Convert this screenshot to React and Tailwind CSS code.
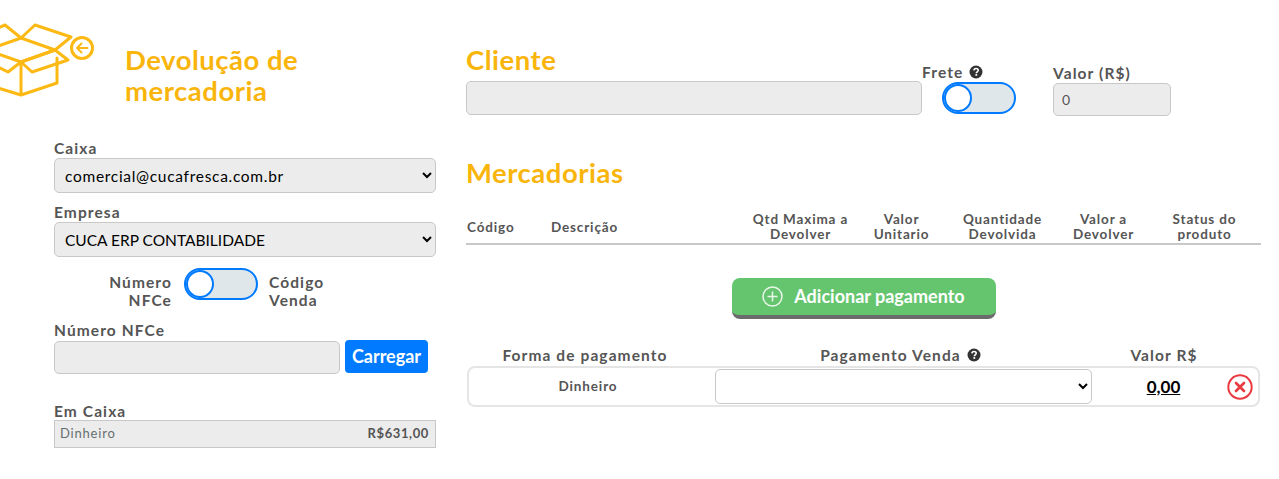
import React from "react";

const font = "font-['Lato','Noto_Sans',sans-serif]";
const fieldBox = "bg-[#ececec] border border-[#c8c8c8] rounded-[5px]";
const labelText = "font-bold text-[#555] text-[15.5px] leading-[18px] tracking-[1.1px]";
const titleText = "font-bold text-[#f9b50b] text-[27.5px] leading-[31px] tracking-[0.5px]";

const BoxIcon = () => (
  <svg width="96" height="80" viewBox="0 20 96 80" fill="none" stroke="#fdb913" strokeWidth="3" strokeLinejoin="round" strokeLinecap="round" className="shrink-0">
    <path d="M-2 88 21 95 57 83V58M21 95V62M-2 46 21 38 55 50 21 62-2 54" />
    <path d="M21 62 55 50 68 60 32 72ZM21 62 8 72-2 67" />
    <path d="M21 38 35 25 71 37 55 50M21 38 5 25-2 28" />
    <circle cx="82" cy="48" r="10.5" />
    <path d="M87.5 48H77M81.5 43.5 77 48 81.5 52.5" strokeWidth="2" />
  </svg>
);

const QuestionIcon = () => (
  <svg width="14" height="14" viewBox="0 0 14 14" className="shrink-0">
    <circle cx="7" cy="7" r="6.5" fill="#333" />
    <path d="M4.9 5.4C5 4.1 6 3.5 7.1 3.5 8.3 3.5 9.2 4.2 9.2 5.3 9.2 6.8 7.3 6.8 7.3 8.2" fill="none" stroke="#fff" strokeWidth="1.6" />
    <rect x="6.4" y="9.1" width="1.8" height="1.7" fill="#fff" />
  </svg>
);

const Toggle = () => (
  <div className="w-[74px] h-[32px] shrink-0 rounded-full border-2 border-[#007bff] bg-[#e0e7eb] flex items-center">
    <div className="w-[28px] h-[28px] rounded-full bg-white border-2 border-[#007bff]" />
  </div>
);

const columns = [
  ["Qtd Maxima a", "Devolver"],
  ["Valor", "Unitario"],
  ["Quantidade", "Devolvida"],
  ["Valor a", "Devolver"],
  ["Status do", "produto"],
];

const headText = "font-bold text-[#555] text-[13.5px] leading-[15px] tracking-[0.85px]";

export default function App() {
  return (
    <div className={`${font} w-[1279px] h-[479px] bg-white flex overflow-hidden`}>
      {/* coluna esquerda */}
      <div className="w-[466px] shrink-0">
        <div className="flex items-start h-[138px] pt-[20px]">
          <BoxIcon />
          <h1 className={`${titleText} ml-[29px] mt-[24px]`}>
            Devolução de
            <br />
            mercadoria
          </h1>
        </div>

        <div className="ml-[54px] w-[382px]">
          <label className={`${labelText} block mt-[1px]`}>Caixa</label>
          <select className={`${fieldBox} w-full h-[35px] mt-[1px] px-[6px] text-[15.5px] tracking-[0.7px] text-black`}>
            <option>comercial@cucafresca.com.br</option>
          </select>

          <label className={`${labelText} block mt-[10px]`}>Empresa</label>
          <select className={`${fieldBox} w-full h-[35px] mt-[1px] px-[6px] text-[15.5px] text-black`}>
            <option>CUCA ERP CONTABILIDADE</option>
          </select>

          <div className="flex items-start mt-[11px]">
            <div className={`${labelText} w-[118px] text-right mt-[5px]`}>
              Número
              <br />
              NFCe
            </div>
            <div className="ml-[12px]">
              <Toggle />
            </div>
            <div className={`${labelText} ml-[11px] mt-[5px]`}>
              Código
              <br />
              Venda
            </div>
          </div>

          <label className={`${labelText} block mt-[12px]`}>Número NFCe</label>
          <div className="flex items-start gap-[5px] mt-[1px]">
            <input className={`${fieldBox} w-[286px] h-[33px] mt-[1px]`} />
            <button className="w-[83px] h-[33px] bg-[#007bff] rounded-[4px] text-white font-bold text-[18px]">Carregar</button>
          </div>

          <label className={`${labelText} block mt-[28px]`}>Em Caixa</label>
          <div className="h-[28px] bg-[#ececec] border border-[#c8c8c8] flex items-center justify-between pl-[5px] pr-[6px] text-[13px] tracking-[0.8px]">
            <span className="text-[#666e70]">Dinheiro</span>
            <span className="font-bold text-[#555] tracking-[0.6px]">R$631,00</span>
          </div>
        </div>
      </div>

      {/* coluna direita */}
      <div className="w-[795px] shrink-0 pt-[44px]">
        <div className="flex items-start h-[72px]">
          <div className="w-[456px]">
            <h2 className={titleText}>Cliente</h2>
            <div className={`${fieldBox} h-[34px] mt-[6px]`} />
          </div>
          <div className="w-[131px] mt-[19px]">
            <div className={`${labelText} flex items-center gap-[6px]`}>
              Frete <QuestionIcon />
            </div>
            <div className="ml-[20px] mt-[1px]">
              <Toggle />
            </div>
          </div>
          <div className="w-[118px] mt-[20px]">
            <div className={labelText}>Valor (R$)</div>
            <div className={`${fieldBox} h-[33px] mt-[1px] flex items-center px-[8px] text-[14px] text-[#555]`}>0</div>
          </div>
        </div>

        <h2 className={`${titleText} mt-[41px]`}>Mercadorias</h2>

        <div className="grid grid-cols-[85px_199px_repeat(5,101px)] items-center border-b-2 border-[#c8c8c8] mt-[24px] pb-[1px] h-[33px]">
          <div className={`${headText} pl-[1px]`}>Código</div>
          <div className={headText}>Descrição</div>
          {columns.map((col) => (
            <div key={col[1] + col[0]} className={`${headText} text-center`}>
              {col[0]}
              <br />
              {col[1]}
            </div>
          ))}
        </div>

        <div className="flex justify-center mt-[33px]">
          <button className="w-[264px] h-[41px] rounded-[8px] bg-[#65c56f] border-b-4 border-[#6b6b6b] flex items-center justify-center gap-[11px] text-white font-bold text-[18px]">
            <svg width="21" height="21" viewBox="0 0 21 21" fill="none" stroke="#e9f7ea" strokeWidth="1.5">
              <circle cx="10.5" cy="10.5" r="9.5" />
              <path d="M10.5 5.5v10M5.5 10.5h10" />
            </svg>
            <span className="-mt-[1px]">Adicionar pagamento</span>
          </button>
        </div>

        <div className="ml-[1px] w-[793px] mt-[27px]">
          <div className="grid grid-cols-[248px_377px_142px_1fr]">
            <div className={`${labelText} text-center pr-[12px]`}>Forma de pagamento</div>
            <div className={`${labelText} flex items-center justify-center gap-[6px] pr-[6px]`}>
              Pagamento Venda <QuestionIcon />
            </div>
            <div className={`${labelText} text-center pl-[2px]`}>Valor R$</div>
          </div>
          <div className="grid grid-cols-[248px_377px_142px_1fr] items-center h-[41px] mt-[2px] border-2 border-[#e5e5e5] rounded-[8px]">
            <div className={`${headText} text-center pr-[10px]`}>Dinheiro</div>
            <select className="w-full h-[35px] bg-white border border-[#c8c8c8] rounded-[5px] -ml-[2px]" />
            <div className="text-center font-bold text-[17px] text-black underline pr-[3px]">0,00</div>
            <div className="flex justify-start -ml-[9px]">
              <svg width="26" height="26" viewBox="0 0 26 26" fill="none" stroke="#ea3a3f">
                <circle cx="13" cy="13" r="11.7" strokeWidth="2" />
                <path d="M9 9l8 8M17 9l-8 8" strokeWidth="2.6" strokeLinecap="round" />
              </svg>
            </div>
          </div>
        </div>
      </div>
    </div>
  );
}
